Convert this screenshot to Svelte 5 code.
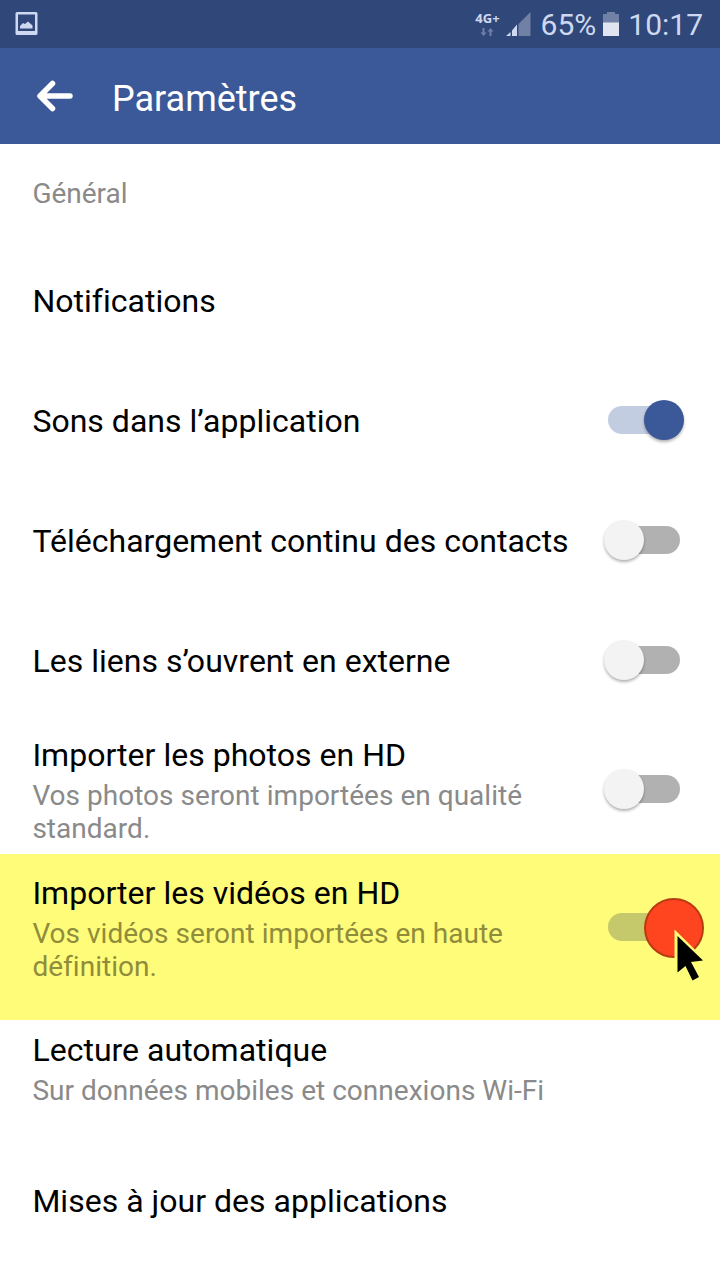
<script lang="ts">
  type Setting = {
    id: string;
    title: string;
    detail?: string;
    enabled?: boolean;
    highlighted?: boolean;
  };

  let settings: Setting[] = $state([
    { id: "notifications", title: "Notifications" },
    { id: "sounds", title: "Sons dans l’application", enabled: true },
    { id: "contacts", title: "Téléchargement continu des contacts", enabled: false },
    { id: "links", title: "Les liens s’ouvrent en externe", enabled: false },
    {
      id: "photos",
      title: "Importer les photos en HD",
      detail: "Vos photos seront importées en qualité standard.",
      enabled: false
    },
    {
      id: "videos",
      title: "Importer les vidéos en HD",
      detail: "Vos vidéos seront importées en haute définition.",
      enabled: true,
      highlighted: true
    },
    {
      id: "autoplay",
      title: "Lecture automatique",
      detail: "Sur données mobiles et connexions Wi-Fi"
    },
    { id: "updates", title: "Mises à jour des applications" }
  ]);
</script>

<main class="screen">
  <div class="status-bar">
    <svg class="picture" width="24" height="26" viewBox="0 0 24 26">
      <path fill-rule="evenodd" d="M2 1h19a1.500 1.500 0 0 1 1.500 1.500v20a1.500 1.500 0 0 1-1.500 1.500H2a1.500 1.500 0 0 1-1.500-1.500v-20A1.500 1.500 0 0 1 2 1zM3 3.500v16.500h17V3.500z" />
      <path d="M5 17.500v-2.500l3-3 2 1 3-2.500 4.500 4v3z" />
    </svg>
    <div class="indicators">
      <div class="network">
        <span>4G+</span>
        <svg width="14" height="9" viewBox="0 0 14 9">
          <path d="M2.500 0h2v4.500H6.500L3.500 8 .5 4.500h2zM9.500 8h2V3.500h2L10.500 0l-3 3.500h2z" />
        </svg>
      </div>
      <svg class="signal" width="25" height="24" viewBox="0 0 25 24">
        <path class="dim" d="M12.500 12L24.500 0v24h-12z" />
        <path d="M0 24l4.500-4v4zM6 18.500l5-6V24H6z" />
      </svg>
      <span class="percent">65%</span>
      <svg class="battery" width="16" height="24" viewBox="0 0 16 24">
        <path class="dim" d="M4 0h8v2h4v9H0V2h4z" />
        <path class="charge" d="M0 10.500h16V24H0z" />
      </svg>
      <span class="clock">10:17</span>
    </div>
  </div>

  <header>
    <button class="back" aria-label="Retour">
      <svg width="38" height="32" viewBox="0 0 38 32">
        <path d="M16.500 3.500L4 16l12.500 12.500M4.500 16H34" />
      </svg>
    </button>
    <h1>Paramètres</h1>
  </header>

  <h2>Général</h2>

  <ul>
    {#each settings as setting (setting.id)}
      <li class={setting.id} class:highlighted={setting.highlighted}>
        <div class="text">
          <p class="title">{setting.title}</p>
          {#if setting.detail}
            <p class="detail">{setting.detail}</p>
          {/if}
        </div>
        {#if setting.enabled !== undefined}
          <button
            class="switch"
            class:on={setting.enabled}
            role="switch"
            aria-checked={setting.enabled}
            aria-label={setting.title}
            onclick={() => (setting.enabled = !setting.enabled)}
          >
            <span class="thumb"></span>
            {#if setting.highlighted}
              <svg class="pointer" width="66" height="88" viewBox="0 0 66 88">
                <circle cx="31" cy="31" r="29" />
                <path class="outline" d="M31.500 32.500V77l8-6 6 14h12l-5-19 11-2z" />
                <path class="arrow" d="M34.500 39L60 63.500l-12 1.500 8 15-6.500 3.500L42.500 69l-8 6.500z" />
              </svg>
            {/if}
          </button>
        {/if}
      </li>
    {/each}
  </ul>
</main>

<style>
  :global(body) {
    margin: 0;
    background: #fff;
  }

  .screen {
    width: 720px;
    height: 1280px;
    overflow: hidden;
    background: #fff;
    font-family: Roboto, "Liberation Sans", sans-serif;
  }

  .status-bar {
    display: flex;
    align-items: center;
    justify-content: space-between;
    height: 48px;
    box-sizing: border-box;
    padding: 0 17px 0 15px;
    background: #30477a;
    color: #ced9f1;
    fill: #ced9f1;
  }

  .indicators {
    display: flex;
    align-items: center;
    font-size: 30px;
  }

  .network {
    display: flex;
    flex-direction: column;
    align-items: center;
    gap: 2px;
    margin-right: 6px;
    font: bold 13px/15px "Open Sans", sans-serif;
  }

  .network svg,
  .dim {
    fill: #7180a5;
  }

  .signal {
    margin-right: 10px;
  }

  .battery {
    margin: 0 9px 0 7px;
  }

  .charge {
    fill: #e0e5f1;
  }

  header {
    display: flex;
    align-items: center;
    height: 96px;
    background: #3b5998;
    color: #fff;
  }

  button {
    border: 0;
    padding: 0;
    background: none;
  }

  .back {
    display: flex;
    margin: 0 38px 0 36px;
  }

  .back path {
    fill: none;
    stroke: #fff;
    stroke-width: 5.500;
    stroke-linecap: round;
    stroke-linejoin: round;
  }

  h1 {
    margin: 5px 0 0;
    font-size: 36px;
    font-weight: 400;
  }

  h2 {
    margin: 0;
    padding: 2px 0 0 32.400px;
    font-size: 28px;
    font-weight: 400;
    line-height: 96px;
    color: #8a8a8a;
  }

  ul {
    margin: 0;
    padding: 0;
    list-style: none;
  }

  li {
    display: flex;
    align-items: center;
    justify-content: space-between;
    height: 120px;
    box-sizing: border-box;
    padding: 0 36px 2px 32.400px;
  }

  li.photos {
    height: 132px;
    padding-top: 4px;
    padding-bottom: 0;
  }

  li.videos {
    height: 166px;
    padding-bottom: 18px;
  }

  li.highlighted {
    background: #fffc7a;
  }

  li.autoplay {
    height: 102px;
    padding-bottom: 4px;
  }

  li.updates {
    height: 160px;
  }

  .text {
    max-width: 540px;
  }

  p {
    margin: 0;
  }

  .title {
    font-size: 32px;
    line-height: 38px;
    letter-spacing: 0.020px;
    white-space: nowrap;
    color: #000;
  }

  .detail {
    max-width: 520px;
    margin-top: 5px;
    font-size: 28px;
    line-height: 33px;
    letter-spacing: 0.020px;
    color: #8a8a8a;
  }

  .highlighted .detail {
    color: #8f8c3c;
  }

  .switch {
    position: relative;
    display: flex;
    align-items: center;
    width: 72px;
    height: 28px;
    margin: 0 4px 2px 0;
    border-radius: 14px;
    background: #b1b1b1;
  }

  .thumb {
    flex: none;
    width: 40px;
    height: 40px;
    margin-left: -4px;
    border-radius: 50%;
    background: #f3f3f3;
    box-shadow: 0 2px 3px rgba(0, 0, 0, 0.3);
  }

  .switch.on {
    background: #c3cde1;
  }

  .on .thumb {
    margin-left: 36px;
    background: #3b5998;
  }

  .highlighted .switch {
    background: #c5c96b;
  }

  .highlighted .thumb {
    visibility: hidden;
  }

  .pointer {
    position: absolute;
    top: -16px;
    left: 35px;
  }

  .pointer circle {
    fill: #ff4420;
    stroke: #b83b12;
    stroke-width: 2;
  }

  .outline {
    fill: #fffc7a;
  }
</style>
